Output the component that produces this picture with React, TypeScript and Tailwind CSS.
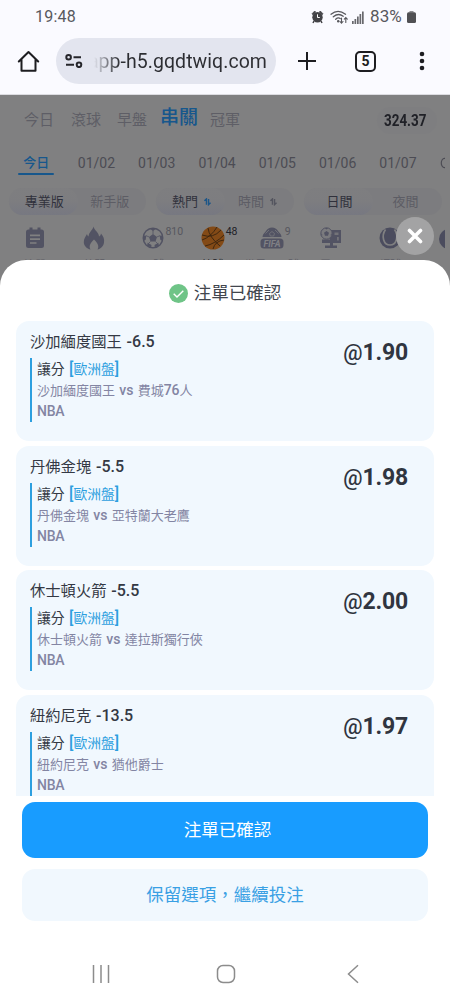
import React from "react";

const dates = ["今日", "01/02", "01/03", "01/04", "01/05", "01/06", "01/07"];

const bets = [
  { pick: "沙加緬度國王", line: "-6.5", home: "沙加緬度國王", away: ["費城", "76", "人"], odds: "1.90" },
  { pick: "丹佛金塊", line: "-5.5", home: "丹佛金塊", away: ["亞特蘭大老鷹"], odds: "1.98" },
  { pick: "休士頓火箭", line: "-5.5", home: "休士頓火箭", away: ["達拉斯獨行俠"], odds: "2.00" },
  { pick: "紐約尼克", line: "-13.5", home: "紐約尼克", away: ["猶他爵士"], odds: "1.97" },
];

function StatusBar() {
  return (
    <div className="flex h-[34px] items-center pl-[35px] pr-[34px] text-[16px] text-[#58585d]">
      <span className="tracking-[0.2px]">19:48</span>
      <div className="ml-auto flex items-center">
        <svg width="13" height="14" viewBox="0 0 13 14" fill="#424246">
          <path d="M1 3.8 3.7 1l1 1-2.8 2.8zM9.3 1 12 3.8l-.9 1L8.3 2z" stroke="#424246" strokeWidth=".7" />
          <circle cx="6.5" cy="7.3" r="5.2" />
          <path d="m3 11-1 2m8-2 1 2" stroke="#424246" strokeWidth="1.5" />
          <path d="M6.5 4.3v3.2h2.3" stroke="#fff" fill="none" />
        </svg>
        <svg className="ml-[6px]" width="19" height="15" viewBox="0 0 19 15" fill="none" stroke="#58585d" strokeWidth="1.3" strokeLinecap="round">
          <path d="M1 4.2Q8 -1.4 15.5 4.2M3.3 6.8Q8.4 2.6 13.2 6.2M5.7 9.2Q8.2 7 10.2 8.6" />
          <path d="M11.5 8v5m-1.5-1.5 1.5 1.7 1.5-1.7M15.8 12.5v-5m-1.5 1.7 1.5-1.7 1.5 1.7" strokeWidth="1.1" />
          <circle cx="8.2" cy="11.3" r=".6" fill="#58585d" />
        </svg>
        <svg className="ml-[3px]" width="12" height="13" viewBox="0 0 12 13" fill="#68686d">
          <path d="M0 10h1.7v3H0zM2.5 8h1.7v5H2.5zM5 5.5h1.7V13H5zM7.5 3h1.7v10H7.5zM10 .5h1.7V13H10z" />
        </svg>
        <span className="ml-[6px] w-[36px] text-[17px] tracking-[0.1px] whitespace-nowrap">83%</span>
        <svg className="ml-[1px]" width="9" height="12" viewBox="0 0 9 12">
          <path d="M2.5 0h4v1.5h-4z" fill="#8a8a8e" />
          <rect y="1.3" width="9" height="10.7" rx="1.5" fill="#505054" />
        </svg>
      </div>
    </div>
  );
}

function BrowserBar() {
  return (
    <div className="flex h-[61px] items-center border-b border-[#dcdce1] pb-[6px] pl-[17px]">
      <svg width="23" height="23" viewBox="0 0 23 23" fill="none" stroke="#1d1d21" strokeWidth="2" strokeLinejoin="round" strokeLinecap="round">
        <path d="M1.8 11.5 11.5 2l9.7 9.5M4.5 9.5v11.3h14V9.5" />
      </svg>
      <div className="ml-[16px] flex h-[46px] w-[220px] items-center rounded-full bg-[#e3e5ef] pl-[9px]">
        <svg width="18" height="14" viewBox="0 0 18 14" fill="none" stroke="#26262b" strokeWidth="2">
          <circle cx="3.6" cy="3.3" r="2.3" />
          <path d="M8.5 3.3H16M1 10.8h8" />
          <circle cx="14" cy="10.8" r="2.3" />
        </svg>
        <div className="ml-[11px] flex w-[173px] justify-end overflow-hidden bg-gradient-to-r from-[#e3e5ef] via-[#2c2d32] via-15% to-[#2c2d32] bg-clip-text pt-[1px] text-[19.5px] leading-[26px] tracking-[0.05px] whitespace-nowrap text-transparent">
          app-h5.gqdtwiq.com
        </div>
      </div>
      <svg className="ml-[22px]" width="18" height="18" viewBox="0 0 18 18" stroke="#1d1d21" strokeWidth="2">
        <path d="M9 0v18M0 9h18" />
      </svg>
      <div className="ml-[39px] flex h-[21px] w-[21px] items-center justify-center rounded-[5px] border-2 border-[#1d1d21] text-[14px] font-bold leading-none text-[#1d1d21]">
        5
      </div>
      <svg className="ml-[43px]" width="6" height="20" viewBox="0 0 6 20" fill="#1d1d21">
        <circle cx="3" cy="3" r="2.3" />
        <circle cx="3" cy="10" r="2.3" />
        <circle cx="3" cy="17" r="2.3" />
      </svg>
    </div>
  );
}

function SortArrows({ active }: { active?: boolean }) {
  return (
    <svg className="ml-[6px]" width="7" height="8" viewBox="0 0 8 9" fill="none" strokeWidth="1.6" stroke={active ? "#1d5688" : "#54555f"}>
      <path d="M.5 3.2 2.8 1v6.5M5.2 1v6.5l2.3-2.2" />
    </svg>
  );
}

function Segment({ left, right, sort, className }: { left: string; right: string; sort?: boolean; className: string }) {
  return (
    <div className={"flex h-[27px] rounded-full bg-[#7c7c7f] text-[13px] " + className}>
      <div className="flex w-1/2 items-center justify-center rounded-full bg-gradient-to-b from-[#7e7e80] via-[#7d7d80] to-[#777881] pl-[2px] text-[#30313c]">
        {left}
        {sort && <SortArrows active />}
      </div>
      <div className="flex w-1/2 items-center justify-center pr-[4px] text-[#5d5d65]">
        {right}
        {sort && <SortArrows />}
      </div>
    </div>
  );
}

function ClipboardIcon() {
  return (
    <svg width="20" height="22" viewBox="0 0 20 22">
      <rect x="1" y="2.5" width="18" height="18.5" rx="2.5" fill="#525363" />
      <path d="M6 .5v4M14 .5v4" stroke="#525363" strokeWidth="3" />
      <path d="M5 8.3h10M5 12.2h10M5 16h6.5" stroke="#808081" strokeWidth="1.7" />
    </svg>
  );
}

function FlameIcon() {
  return (
    <svg width="22" height="24" viewBox="0 0 22 24" fill="#525363">
      <path d="M10.500.5C11 4 16 6.500 16 10.500c1-.5 1.800-1.500 2-3 2.500 3 3.500 5.500 3 9-.5 4-3.500 6.500-6.500 7 2-3.500 0-6.500-3.500-10-3.500 3.500-5.500 6.500-3.500 10C4 22.800 1 20 .8 16.500.6 13 2.500 10.500 4 8c.3 1.200.7 2 1.600 2.600C5.500 6.500 9.500 4.500 10.500.5z" />
    </svg>
  );
}

function SoccerIcon() {
  return (
    <svg width="22" height="22" viewBox="0 0 22 22" fill="#525363">
      <circle cx="11" cy="11" r="9.8" fill="none" stroke="#525363" strokeWidth="1.4" />
      <path d="m11 7 4 2.9-1.5 4.6h-5L7 9.9zM8 1.6h6L11 4.3zM1.3 9l3-.4-.6 4.2-1.700 1zM20.700 9l-3-.4.6 4.200 1.700 1zM5 18.700l.7-2.900 3.800 2.300-.4 2.300zM17 18.700l-.7-2.900-3.800 2.300.4 2.300z" />
      <path d="M11 7V4M7 9.900 4 8.700M15 9.900l3-1.200M8.500 14.500l-2.300 2.300M13.500 14.500l2.300 2.300" stroke="#525363" strokeWidth=".8" />
    </svg>
  );
}

function BasketballIcon() {
  return (
    <svg width="24" height="24" viewBox="0 0 24 24">
      <circle cx="12" cy="12" r="11.5" fill="#834a16" />
      <path d="M1 9q11 4 19-5M4 20Q14 18 23 9M7 2q1 9 12 18M1 14q9-3 15-13M12 23q2-8 11-9" fill="none" stroke="#38230f" strokeWidth=".9" />
    </svg>
  );
}

function FifaIcon() {
  return (
    <svg width="24" height="22" viewBox="0 0 24 22">
      <path d="M2.5 10C2.5 7 5 5.5 6 4q2-3.5 6-3.5T18 4c1 1.5 3.5 3 3.5 6z" fill="#525363" />
      <path d="m12 4.5 2.5 2-.8 2.5h-3.4l-.8-2.5zM5.5 6.5 9 3M18.5 6.5 15 3" fill="none" stroke="#77777c" strokeWidth=".8" />
      <rect x=".5" y="11.5" width="23" height="10" rx="3.5" fill="#525363" />
      <text x="12" y="19.7" textAnchor="middle" fontSize="9" fontWeight="700" fontStyle="italic" textLength="17" lengthAdjust="spacingAndGlyphs" fill="#808085">FIFA</text>
    </svg>
  );
}

function EsportsIcon() {
  return (
    <svg width="22" height="22" viewBox="0 0 22 22" fill="#525363">
      <path d="M10 3h11v13H2v-3.5h8z" />
      <path d="M14.5 5.5h4V8h-4zM17 10h1.8v3.5H17z" fill="#737378" />
      <circle cx="6.5" cy="6.5" r="5.7" fill="#7b7b7e" stroke="#525363" />
      <path d="m6.5 4 2.5 1.8-1 3H5l-1-3zM5 1h3L6.5 2.5zM1 6l1.5 2L1.8 9zM12 6l-1.500 2 .7 1zM10 16h3v3h-3zM5 18.500h12V21H5z" />
    </svg>
  );
}

function TennisIcon() {
  return (
    <svg width="22" height="22" viewBox="0 0 22 22">
      <circle cx="11" cy="11" r="10.5" fill="#4b4c5e" />
      <path d="M6.500 2.500C2 9 4.500 18 11 18s9-9 4.500-15.500" fill="none" stroke="#808081" strokeWidth="1.7" />
    </svg>
  );
}

const sports = [
  { label: "注單", icon: <ClipboardIcon />, count: "" },
  { label: "熱門", icon: <FlameIcon />, count: "" },
  { label: "足球", icon: <SoccerIcon />, count: "810" },
  { label: "籃球", icon: <BasketballIcon />, count: "48" },
  { label: "世界盃足球", icon: <FifaIcon />, count: "9" },
  { label: "電子", icon: <EsportsIcon />, count: "" },
  { label: "網球", icon: <TennisIcon />, count: "6" },
];

function SportsPage() {
  return (
    <div className="h-[905px] overflow-hidden bg-[#808081]">
      <div className="flex h-[51px] items-center pl-[24px] text-[15px] text-[#5e5e66]">
        <span className="w-[47px]">今日</span>
        <span className="w-[46px]">滾球</span>
        <span className="w-[43px]">早盤</span>
        <span className="w-[50px] pb-[5px] text-[19px] font-medium leading-[24px] text-[#17578c]">串關</span>
        <span>冠軍</span>
        <div className="mr-[13px] ml-auto flex h-[27px] w-[60px] items-center justify-start rounded-full bg-[#7e7e80] pl-[7px]">
          <span className="origin-left scale-x-[0.79] text-[17px] font-bold text-[#202127]">324.37</span>
        </div>
      </div>
      <div className="flex h-[38px] w-[445px] overflow-hidden pl-[6px] text-[14px] text-[#4c4c54]">
        {dates.map((date, i) => (
          <div key={date} className={"flex w-[60.3px] shrink-0 flex-col items-center pt-[7px] leading-[20px] " + (i === 0 ? "text-[13px] font-medium text-[#17578c]" : "")}>
            {date}
            {i === 0 && <div className="h-[2px] w-[36px] shrink-0 rounded bg-[#17578c]" />}
          </div>
        ))}
        <svg className="mt-[11px] ml-[12px]" width="5" height="12" viewBox="0 0 5 12" fill="none" stroke="#4c4c54" strokeWidth="1.2">
          <ellipse cx="4.500" cy="6" rx="3.2" ry="4.7" />
        </svg>
      </div>
      <div className="flex pt-[4px]">
        <Segment left="專業版" right="新手版" className="ml-[9px] w-[137px]" />
        <Segment left="熱門" right="時間" sort className="ml-[10px] w-[138px]" />
        <Segment left="日間" right="夜間" className="ml-[10px] w-[138px]" />
      </div>
      <div className="flex w-[445px] overflow-hidden pt-[11px] pl-[5.5px]">
        {sports.map((sport) => (
          <div key={sport.label} className="flex w-[59.2px] shrink-0 flex-col items-center">
            <div className="relative flex h-[24px] items-center">
              {sport.icon}
              <span className={"absolute top-[-1px] left-full ml-[1px] text-[10.5px] leading-[14px] " + (sport.count === "48" ? "text-[#202127]" : "text-[#56565e]")}>{sport.count}</span>
            </div>
            <span className={"mt-[8px] text-[11px] leading-[16px] whitespace-nowrap " + (sport.count === "48" ? "text-[#202127]" : "text-[#5e5e66]")}>{sport.label}</span>
          </div>
        ))}
        <svg className="mt-[2px] ml-[18px] shrink-0" width="22" height="22" viewBox="0 0 22 22">
          <circle cx="11" cy="11" r="10" fill="#4b4c5e" />
        </svg>
      </div>
    </div>
  );
}

function BetCard({ bet }: { bet: (typeof bets)[number] }) {
  return (
    <div className="flex h-[120px] shrink-0 justify-between rounded-[13px] bg-[#f1f8fe] pt-[10px] pr-[26px] pl-[14px]">
      <div>
        <div className="h-[27px] text-[15.3px] leading-[23px] text-[#343944]">
          {bet.pick} <span className="ml-[1px] text-[16px] font-medium leading-none">{bet.line}</span>
        </div>
        <div className="h-[64px] border-l-2 border-[#2d9fdf] pl-[5px] text-[13px] text-[#8385a3]">
          <div className="h-[22px] text-[13.8px] leading-[22px] text-[#343944]">
            讓分 <span className="ml-[1px] text-[#2d9fdf]"><b className="text-[16px] font-medium leading-none">[</b>歐洲盤<b className="text-[16px] font-medium leading-none">]</b></span>
          </div>
          <div className="h-[21px] leading-[21px]">
            {bet.home} <span className="mx-[1px] text-[14px] font-medium leading-none">vs</span>{" "}
            {bet.away.map((part) => (
              <span key={part} className={part === "76" ? "text-[14px] font-medium leading-none" : ""}>{part}</span>
            ))}
          </div>
          <div className="text-[14px] leading-[20px] font-medium tracking-[-0.3px]">NBA</div>
        </div>
      </div>
      <div className="flex pt-[8px] text-[23px] leading-[28px] font-bold text-[#303540]">
        <span className="text-[21.5px] font-medium">@</span>
        <span className="tracking-[-0.2px]">{bet.odds}</span>
      </div>
    </div>
  );
}

function ConfirmSheet() {
  return (
    <div className="absolute inset-x-0 top-[260px] bottom-0 flex flex-col rounded-t-[26px] bg-white">
      <div className="flex h-[61px] shrink-0 items-center justify-center pt-[5px] text-[17.5px] text-[#42464e]">
        <svg className="mr-[6px]" width="19" height="19" viewBox="0 0 19 19">
          <circle cx="9.5" cy="9.5" r="9.5" fill="#6fc487" />
          <path d="m4.7 9.7 3.3 3.3 6.3-6.3" fill="none" stroke="#fff" strokeWidth="1.4" />
        </svg>
        注單已確認
      </div>
      <div className="mx-[16px] flex h-[475px] shrink-0 flex-col gap-[4.7px] overflow-hidden">
        {bets.map((bet) => <BetCard key={bet.pick} bet={bet} />)}
      </div>
      <button className="mx-[22px] mt-[6px] h-[56px] shrink-0 rounded-[13px] bg-[#189cff] pl-[5px] text-[17.5px] text-white">注單已確認</button>
      <button className="mx-[22px] mt-[11px] h-[52px] shrink-0 rounded-[13px] bg-[#f1f8fe] text-[17.5px] text-[#39a0e4]">保留選項，繼續投注</button>
      <div className="mt-[43px] flex items-center pl-[92px]">
        <svg width="18" height="20" viewBox="0 0 18 20" stroke="#8c8c8c" strokeWidth="1.5">
          <path d="M1.500 1v18M9 1v18M16.500 1v18" />
        </svg>
        <svg className="ml-[106px]" width="20" height="20" viewBox="0 0 20 20" fill="none" stroke="#8c8c8c" strokeWidth="1.5">
          <rect x="1.5" y="1.5" width="17" height="17" rx="5.5" />
        </svg>
        <svg className="ml-[111px]" width="12" height="20" viewBox="0 0 12 20" fill="none" stroke="#8c8c8c" strokeWidth="1.5">
          <path d="m11 1.300-9.500 8.700 9.500 8.700" />
        </svg>
      </div>
    </div>
  );
}

export default function App() {
  return (
    <div className="relative h-[1000px] w-[450px] overflow-hidden bg-[#fafaff] font-['Roboto','Noto_Sans_CJK_TC',sans-serif]">
      <StatusBar />
      <BrowserBar />
      <SportsPage />
      <ConfirmSheet />
      <button className="absolute top-[217px] left-[396px] flex h-[38px] w-[38px] items-center justify-center rounded-full bg-[#a3a3a4]">
        <svg width="16" height="16" viewBox="0 0 16 16" stroke="#fff" strokeWidth="3.6" strokeLinecap="round">
          <path d="m2.500 2.500 11 11m0-11-11 11" />
        </svg>
      </button>
    </div>
  );
}
